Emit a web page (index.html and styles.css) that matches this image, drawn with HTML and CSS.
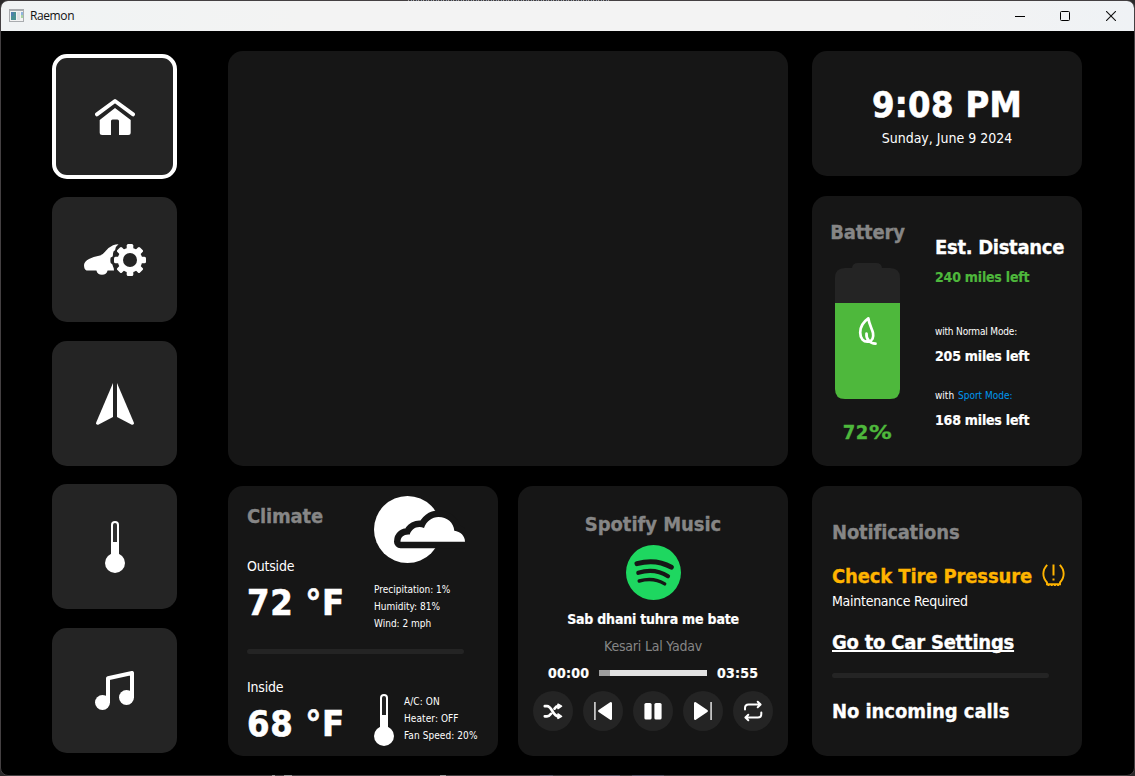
FILE: index.html
```html
<!DOCTYPE html>
<html lang="en">
<head>
<meta charset="utf-8">
<title>Raemon</title>
<link rel="stylesheet" href="styles.css">
</head>
<body>
<div class="window">
  <header class="titlebar">
    <svg class="app-icon" width="15" height="13" viewBox="0 0 15 13"><rect width="15" height="13" fill="#a9acaf"/><rect x="1" y="2" width="13" height="10" fill="#f3f3f3"/><rect x="2" y="3" width="5" height="8" fill="#4a8f92"/><rect x="2" y="3" width="2.5" height="4" fill="#4f7fae"/><rect x="8" y="3" width="3" height="8" fill="#dfe2e4"/><rect x="12" y="3" width="2" height="3" fill="#8fb4dd"/><rect x="12" y="6" width="2" height="3" fill="#a9d3a5"/></svg>
    <span class="app-name">Raemon</span>
    <div class="window-buttons">
      <svg width="10" height="10" viewBox="0 0 10 10"><path d="M0 5.5H10" stroke="#000"/></svg>
      <svg width="10" height="10" viewBox="0 0 10 10"><rect x=".5" y=".5" width="9" height="9" rx="1" fill="none" stroke="#000"/></svg>
      <svg class="close" width="10" height="10" viewBox="0 0 10 10"><path d="M0 0L10 10M10 0L0 10" stroke="#111" stroke-width="1.1"/></svg>
    </div>
  </header>

  <main class="dashboard">
    <nav class="nav">
      <button class="tile tile-active" aria-label="Home">
        <svg width="40" height="36" viewBox="0 0 40 36"><path d="M1.9 15.4L20 2L38.1 15.4" fill="none" stroke="#fff" stroke-width="3.8" stroke-linecap="round" stroke-linejoin="round"/><path d="M20 9L35.7 21V33.5Q35.7 36 33.2 36H24V22Q24 20.4 22.4 20.4H17.6Q16 20.4 16 22V36H7.2Q4.7 36 4.7 33.5V21Z" fill="#fff"/></svg>
      </button>
      <button class="tile" aria-label="Car settings">
        <svg width="62" height="32" viewBox="0 0 62 32"><path d="M2.5 26.5Q0 25.500 0 21Q.3 17.500 5 15Q9 13 16 11.600Q18.500 11 21 7.800Q25 2.800 29 1.200Q31.500 .3 34.500 .3Q31 3 31.200 6Q28.500 7.500 29 11Q29 13 26.700 13.500Q26 16 26.700 19Q29 20 29 22.500Q30 24 30 26.500H23.600A5.800 5.800 0 0 1 12.400 26.500Z" fill="#fff"/><g fill="#fff"><rect x="42.700" y="0" width="6.600" height="32" rx="1.500"/><rect x="30" y="12.700" width="32" height="6.600" rx="1.500"/><rect x="42.700" y="0" width="6.600" height="32" rx="1.500" transform="rotate(45 46 16)"/><rect x="42.700" y="0" width="6.600" height="32" rx="1.500" transform="rotate(-45 46 16)"/><circle cx="46" cy="16" r="12.300"/></g><circle cx="46" cy="16" r="7" fill="#242424"/></svg>
      </button>
      <button class="tile tile-low" aria-label="Navigation">
        <svg width="38" height="42" viewBox="0 0 38 42"><path d="M17 0V34L2.200 41.700Q-.3 42.200 .2 39.500Z" fill="#fff"/><path d="M21 0V34L35.800 41.700Q38.300 42.200 37.800 39.500Z" fill="#fff"/></svg>
      </button>
      <button class="tile" aria-label="Temperature">
        <svg width="20" height="52" viewBox="0 0 20 52"><rect x="6" width="8" height="40" rx="4" fill="#fff"/><circle cx="10" cy="42" r="10" fill="#fff"/><path d="M8 21V4a2 2 0 0 1 4 0V21Z" fill="#303030"/></svg>
      </button>
      <button class="tile" aria-label="Music">
        <svg width="39" height="39" viewBox="0 0 39 39"><path d="M13 32V7.300L37 2V27" fill="none" stroke="#fff" stroke-width="4" stroke-linejoin="round"/><circle cx="7.500" cy="31.500" r="7.500" fill="#fff"/><circle cx="31.500" cy="26.500" r="7.500" fill="#fff"/></svg>
      </button>
    </nav>

    <div class="column-main">
      <section class="card map"></section>
      <div class="row">
        <section class="card climate">
          <div class="climate-row outside">
            <div class="reading">
              <h2 class="title">Climate</h2>
              <div class="text place">Outside</div>
              <div class="big">72 °F</div>
            </div>
            <div class="weather">
              <svg width="91" height="67" viewBox="0 0 91 67"><circle cx="33.500" cy="33.500" r="33.500" fill="#fff"/><path d="M26.500 45.700C26.500 41 30 38 35.800 38.600C37 33.500 43 29 50 32C52.500 25 58 21 64.500 21C73 21 79.800 26.500 80.300 34.800C86.500 35.500 91 40 91 45.700Z" fill="#161616" stroke="#161616" stroke-width="13" stroke-linejoin="round"/><path d="M26.500 45.700C26.500 41 30 38 35.800 38.600C37 33.500 43 29 50 32C52.500 25 58 21 64.500 21C73 21 79.800 26.500 80.300 34.800C86.500 35.500 91 40 91 45.700Z" fill="#fff"/></svg>
              <div class="small details">Precipitation: 1%<br>Humidity: 81%<br>Wind: 2 mph</div>
            </div>
          </div>
          <div class="divider"></div>
          <div class="climate-row inside">
            <div class="reading">
              <div class="text">Inside</div>
              <div class="big inside-temp">68 °F</div>
            </div>
            <svg class="thermo" width="20" height="52" viewBox="0 0 20 52"><rect x="6" width="8" height="40" rx="4" fill="#fff"/><circle cx="10" cy="42" r="10" fill="#fff"/><path d="M8 21V4a2 2 0 0 1 4 0V21Z" fill="#222"/></svg>
            <div class="small details-inside">A/C: ON<br>Heater: OFF<br>Fan Speed: 20%</div>
          </div>
        </section>

        <section class="card player">
          <h2 class="title title-player">Spotify Music</h2>
          <svg class="spotify" width="55" height="55" viewBox="0 0 55 55"><circle cx="27.500" cy="27.500" r="27.500" fill="#1ed760"/><g fill="none" stroke="#161616" stroke-linecap="round"><path d="M11 18.600Q30 13.400 45.300 22.200" stroke-width="5"/><path d="M12.300 27.800Q28.500 22.600 42 31.200" stroke-width="4.200"/><path d="M13.200 36Q27.500 31.900 38.700 38.900" stroke-width="3.400"/></g></svg>
          <div class="strong track">Sab dhani tuhra me bate</div>
          <div class="text artist">Kesari Lal Yadav</div>
          <div class="progress">
            <span class="strong time">00:00</span>
            <div class="bar"><div class="bar-played"></div></div>
            <span class="strong time">03:55</span>
          </div>
          <div class="controls">
            <button class="control" aria-label="Shuffle"><svg width="40" height="40" viewBox="0 0 40 40"><path d="M11.800 15.200H14C19 15.200 20 25.300 25 25.300H26M11.800 25.300H14C16 25.300 17 24.300 18 22.800M21.500 17.700C22.500 16.200 23.500 15.200 25 15.200H26" fill="none" stroke="#fff" stroke-width="2.700" stroke-linecap="round"/><path d="M25 13.200L28.500 15.200L25 17.500ZM25 23L28.500 25.300L25 27.400Z" fill="#fff" stroke="#fff" stroke-width="1.600" stroke-linejoin="round"/></svg></button>
            <button class="control" aria-label="Previous"><svg width="40" height="40" viewBox="0 0 40 40"><path d="M11.900 11V29" stroke="#ccc" stroke-width="1.700"/><path d="M16.300 20L27.800 12.200V27.800Z" fill="#fff" stroke="#fff" stroke-width="2.400" stroke-linejoin="round"/></svg></button>
            <button class="control" aria-label="Pause"><svg width="40" height="40" viewBox="0 0 40 40"><rect x="11.400" y="12" width="7.200" height="16.500" rx="1.600" fill="#fff"/><rect x="21.400" y="12" width="7.200" height="16.500" rx="1.600" fill="#fff"/></svg></button>
            <button class="control" aria-label="Next"><svg width="40" height="40" viewBox="0 0 40 40"><path d="M28.100 11V29" stroke="#ccc" stroke-width="1.700"/><path d="M23.700 20L12.200 12.200V27.800Z" fill="#fff" stroke="#fff" stroke-width="2.400" stroke-linejoin="round"/></svg></button>
            <button class="control" aria-label="Repeat"><svg width="40" height="40" viewBox="0 0 40 40"><path d="M12 18.500V17Q12 13.500 15.500 13.500H27.500M24.700 10.800L27.600 13.500L24.700 16.300M28.300 21.500V23Q28.300 26.500 24.800 26.500H12.500M15.300 23.700L12.400 26.500L15.300 29.200" fill="none" stroke="#fff" stroke-width="2" stroke-linecap="round" stroke-linejoin="round"/></svg></button>
          </div>
        </section>
      </div>
    </div>

    <div class="column-side">
      <section class="card clock">
        <div class="big">9:08 PM</div>
        <div class="text date">Sunday, June 9 2024</div>
      </section>

      <section class="card battery">
        <div class="charge">
          <h2 class="title">Battery</h2>
          <svg class="cell" width="65" height="136" viewBox="0 0 65 136"><path d="M0 40V15Q0 5 10 5H17Q17.500 0 23 0H41Q46.500 0 47 5H55Q65 5 65 15V40Z" fill="#242424"/><path d="M0 40H65V126Q65 136 55 136H10Q0 136 0 126Z" fill="#4eb83c"/><path d="M33.300 55.300C28 59 25.200 64 25.200 69.500C25.200 75.500 28.500 79.300 33.500 78.600C37.500 78 38.800 74.500 38 70C37.300 66.500 34.300 62 33.300 55.300ZM31.500 70.500C31 76 35 80.800 40.500 80.700" fill="none" stroke="#fff" stroke-width="2.700" stroke-linecap="round" stroke-linejoin="round"/></svg>
          <div class="percent">72<span class="percent-sign">%</span></div>
        </div>
        <div class="range">
          <div class="subtitle distance">Est. Distance</div>
          <div class="strong green now">240 miles left</div>
          <div class="small mode-normal">with Normal Mode:</div>
          <div class="strong miles">205 miles left</div>
          <div class="small mode-sport">with <span class="sport">Sport Mode:</span></div>
          <div class="strong miles">168 miles left</div>
        </div>
      </section>

      <section class="card notifications">
        <h2 class="title">Notifications</h2>
        <div class="alert">
          <div class="subtitle amber">Check Tire Pressure</div>
          <svg width="23" height="22" viewBox="0 0 23 22"><path d="M5.200 .8C.2 6 0 13 5 18.500V20.300H18V18.500C23 13 22.800 6 17.800 .8" fill="none" stroke="#ffb400" stroke-width="1.900"/><path d="M5.500 21H18" stroke="#ffb400" stroke-width="1.800" stroke-dasharray="2 1.200"/><path d="M11.500 .5V11.500M11.500 14.400V16.600" stroke="#ffb400" stroke-width="2"/></svg>
        </div>
        <div class="text required">Maintenance Required</div>
        <a class="subtitle link" href="#">Go to Car Settings</a>
        <div class="divider"></div>
        <div class="subtitle calls">No incoming calls</div>
      </section>
    </div>
  </main>
</div>
<div class="backdrop-top"></div>
<div class="backdrop-bottom"></div>
</body>
</html>
```
FILE: styles.css
```css
* {
  box-sizing: border-box;
}

body {
  position: relative;
  margin: 0;
  width: 1135px;
  height: 776px;
  overflow: hidden;
  background: #2b2a2b;
  color: #fff;
  font-family: "DejaVu Sans Condensed", "DejaVu Sans", sans-serif;
}

svg {
  display: block;
  flex: none;
}

button {
  padding: 0;
  border: 0;
  font: inherit;
  color: inherit;
}

.window {
  width: 1135px;
  height: 776px;
  border: 1px solid #444042;
  border-radius: 8px;
  background: #000;
  overflow: hidden;
}

/* Slivers of the desktop showing along the window edges */
.backdrop-top {
  position: absolute;
  top: 0;
  left: 408px;
  width: 201px;
  height: 1px;
  background: repeating-linear-gradient(90deg, #a8a4a6 0 1px, #444042 1px 3px, #8494a8 3px 4px, #444042 4px 5px);
}

.backdrop-bottom {
  position: absolute;
  bottom: 0;
  left: 272px;
  width: 392px;
  height: 1px;
  background: linear-gradient(90deg, #999 0 3px, transparent 3px 12px, #999 12px 20px, transparent 20px 168px, #999 168px 174px, transparent 174px 268px, #5a5868 268px 281px, transparent 281px 318px, #5a5868 318px 348px, transparent 348px 360px, #5a5868 360px);
}

.titlebar {
  display: flex;
  align-items: center;
  height: 30px;
  padding: 0 18px 0 8px;
  background: linear-gradient(90deg, #f0f3f4, #f3f3f3 300px, #f3f3f3 900px, #eff2f5);
}

.app-icon {
  margin-top: -2px;
}

.app-name {
  margin-left: 6px;
  color: #111;
  font: 12px/16px "Open Sans", sans-serif;
  letter-spacing: -0.4px;
}

.window-buttons {
  display: flex;
  gap: 35px;
  margin-left: auto;
  margin-top: -1px;
}

.close {
  margin-left: 1px;
}

.dashboard {
  display: flex;
  padding: 20px 51px 0;
}

.nav {
  display: flex;
  flex-direction: column;
  gap: 18.4px;
  margin: 3px 51px 0 0;
}

.tile {
  display: flex;
  align-items: center;
  justify-content: center;
  width: 125px;
  height: 125px;
  border-radius: 15px;
  background: #242424;
}

.tile-active {
  border: 4px solid #fff;
}

.tile-low {
  padding-top: 1px;
}

.card {
  border-radius: 15px;
  background: #161616;
}

.column-main,
.column-side {
  display: flex;
  flex-direction: column;
  gap: 20px;
}

.column-side {
  margin-left: 24px;
}

.map {
  width: 560px;
  height: 415px;
}

.row {
  display: flex;
  gap: 20px;
}

/* Text styles */

.title,
.subtitle,
.percent {
  margin: 0;
  font-size: 20px;
  font-weight: bold;
  line-height: 24px;
  letter-spacing: -0.17px;
  white-space: nowrap;
  -webkit-text-stroke: 0.3px;
}

.title {
  color: #868686;
}

.big {
  margin-bottom: 1px;
  font-size: 36px;
  font-weight: bold;
  line-height: 43px;
  letter-spacing: 0.35px;
  white-space: nowrap;
  -webkit-text-stroke: 0.6px;
}

.strong {
  font-size: 14px;
  font-weight: bold;
  line-height: 20px;
  letter-spacing: -0.2px;
  white-space: nowrap;
  -webkit-text-stroke: 0.2px;
}

.text {
  font-size: 14px;
  line-height: 20px;
  letter-spacing: -0.2px;
  white-space: nowrap;
}

.small {
  font-size: 10px;
  line-height: 17px;
  white-space: nowrap;
}

.divider {
  width: 217px;
  height: 5px;
  border-radius: 2.5px;
  background: #242424;
}

/* Clock */

.clock {
  width: 270px;
  height: 125px;
  padding-top: 32px;
  text-align: center;
}

.clock .big {
  margin-bottom: 2px;
}

.clock .date {
  letter-spacing: 0;
}

/* Battery */

.battery {
  display: flex;
  gap: 30px;
  width: 270px;
  height: 270px;
  padding: 24px 0 0 18px;
}

.charge {
  display: flex;
  flex-direction: column;
  align-items: center;
  width: 75px;
}

.cell {
  margin: 19px 0 21px;
}

.percent {
  padding-right: 5px;
  color: #4eb83c;
  letter-spacing: 0.4px;
}

.percent-sign {
  display: inline-block;
  transform: scaleX(1.26);
  transform-origin: left;
}

.range {
  padding-top: 15px;
}

.distance {
  letter-spacing: -0.3px;
}

.green {
  color: #4eb83c;
}

.now {
  margin-top: 8px;
}

.mode-normal {
  margin-top: 36px;
  letter-spacing: -0.17px;
}

.mode-sport {
  margin-top: 21px;
}

.sport {
  margin-left: 1px;
  color: #0096f0;
}

.miles {
  margin-top: 6px;
}

/* Climate */

.climate {
  width: 270px;
  height: 270px;
  padding-left: 19px;
}

.climate-row {
  display: flex;
}

.outside {
  height: 163px;
}

.reading {
  width: 127px;
}

.outside .reading {
  padding-top: 18px;
}

.place {
  margin: 28px 0 5px;
}

.climate .big {
  letter-spacing: 0.6px;
}

.weather {
  padding-top: 10px;
}

.details {
  margin-top: 18px;
}

.inside {
  padding-top: 23px;
}

.inside-temp {
  margin-top: 5px;
}

.thermo {
  margin-top: 17px;
}

.details-inside {
  margin: 16px 0 0 10px;
  letter-spacing: 0.08px;
}

/* Player */

.player {
  display: flex;
  flex-direction: column;
  align-items: center;
  width: 270px;
  height: 270px;
  padding-top: 26px;
}

.title-player {
  letter-spacing: -0.05px;
}

.spotify {
  margin: 9px 0;
}

.artist {
  margin-top: 7px;
  color: #868686;
}

.progress {
  display: flex;
  align-items: center;
  gap: 10px;
  margin-top: 7px;
}

.time {
  width: 41px;
  letter-spacing: 0.2px;
}

.bar {
  width: 108px;
  height: 6px;
  background: #e2e2e2;
}

.bar-played {
  width: 11px;
  height: 6px;
  background: #9d9d9d;
}

.controls {
  display: flex;
  gap: 10px;
  margin-top: 8px;
}

.control {
  width: 40px;
  height: 40px;
  border-radius: 50%;
  background: #242424;
}

/* Notifications */

.notifications {
  width: 270px;
  height: 270px;
  padding: 34px 0 0 20px;
}

.alert {
  display: flex;
  justify-content: space-between;
  width: 233px;
  margin-top: 20px;
}

.amber {
  color: #ffb400;
  letter-spacing: -0.13px;
}

.required {
  margin: 3px 0 19px;
  letter-spacing: -0.27px;
}

.link {
  display: block;
  width: max-content;
  margin-bottom: 19px;
  color: #fff;
  letter-spacing: -0.22px;
  text-decoration: underline;
  text-decoration-thickness: 2px;
  text-underline-offset: 1px;
  text-decoration-skip-ink: none;
}

.calls {
  margin-top: 21px;
  letter-spacing: -0.06px;
}
```
